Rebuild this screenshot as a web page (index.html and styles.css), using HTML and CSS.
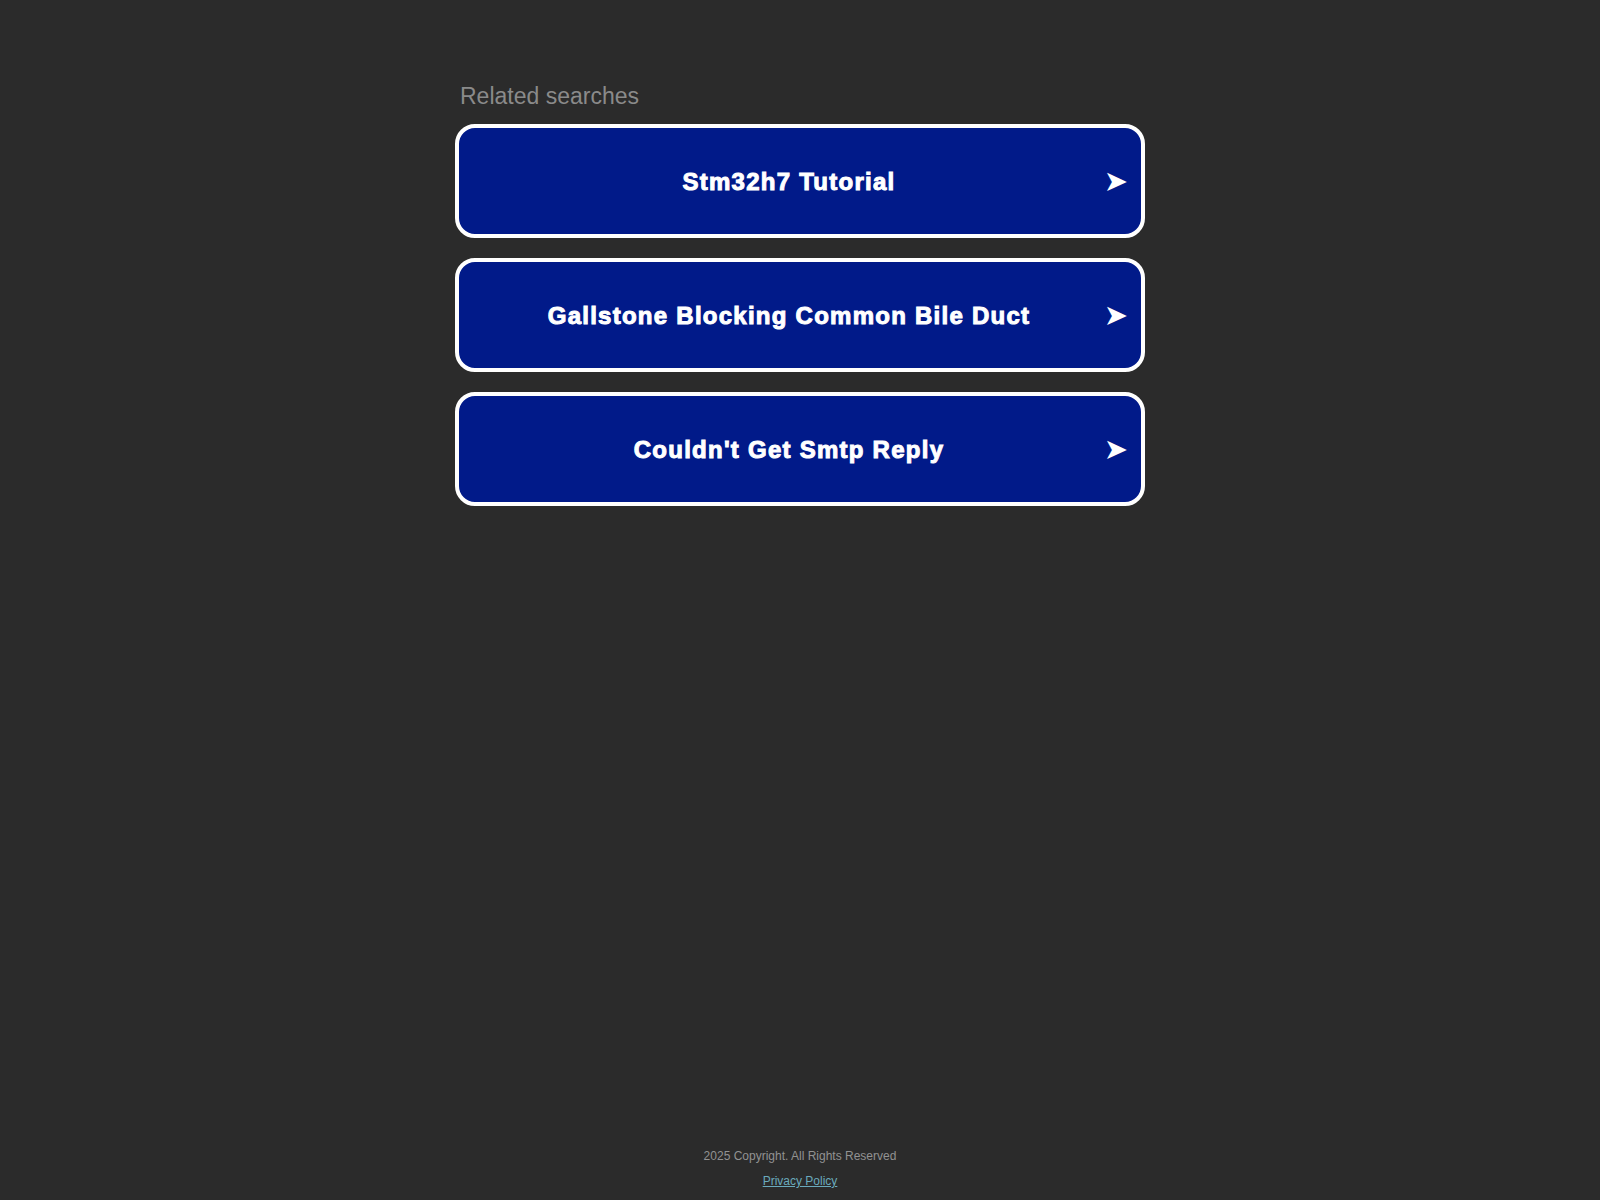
FILE: index.html
```html
<!DOCTYPE html>
<html lang="en">
<head>
<meta charset="utf-8">
<title>Related searches</title>
<link rel="stylesheet" href="styles.css">
</head>
<body>
<div class="page">
  <main class="content">
    <h2 class="heading">Related searches</h2>
    <ul class="links">
      <li><a class="link" href="#"><span class="label">Stm32h7 Tutorial</span><span class="arrow">&#10148;</span></a></li>
      <li><a class="link" href="#"><span class="label">Gallstone Blocking Common Bile Duct</span><span class="arrow">&#10148;</span></a></li>
      <li><a class="link" href="#"><span class="label">Couldn't Get Smtp Reply</span><span class="arrow">&#10148;</span></a></li>
    </ul>
  </main>
  <footer class="footer">
    <div class="copy">2025 Copyright. All Rights Reserved</div>
    <a class="privacy" href="#">Privacy Policy</a>
  </footer>
</div>
</body>
</html>
```

FILE: styles.css
```css
html, body {
  margin: 0;
  padding: 0;
  background: #2b2b2b;
}
body {
  font-family: "Liberation Sans", Arial, sans-serif;
}
.page {
  min-height: 100vh;
  display: flex;
  flex-direction: column;
  align-items: center;
}
.content {
  width: 690px;
  padding-top: 83px;
}
.heading {
  margin: 0 0 14px 5px;
  font-size: 23px;
  font-weight: normal;
  color: #8a8a8a;
  line-height: 27px;
}
.links {
  list-style: none;
  margin: 0;
  padding: 0;
  display: flex;
  flex-direction: column;
  gap: 20px;
}
.link {
  display: flex;
  align-items: center;
  height: 106px;
  border: 4px solid #ffffff;
  border-radius: 20px;
  background: #011a89;
  color: #ffffff;
  text-decoration: none;
  position: relative;
}
.label {
  flex: 1;
  text-align: center;
  padding-right: 22px;
  padding-top: 2px;
  font-size: 24px;
  font-weight: bold;
  letter-spacing: 1.25px;
  -webkit-text-stroke: 1px #ffffff;
}
.arrow {
  position: absolute;
  right: 13px;
  top: 50%;
  transform: translateY(-50%);
  font-size: 29px;
  line-height: 1;
  font-family: "DejaVu Sans", sans-serif;
}
.footer {
  margin-top: auto;
  padding-bottom: 12px;
  display: flex;
  flex-direction: column;
  align-items: center;
  gap: 11px;
  font-size: 12px;
}
.copy {
  color: #929292;
}
.privacy {
  color: #6aaabd;
  text-decoration: underline;
}
```
